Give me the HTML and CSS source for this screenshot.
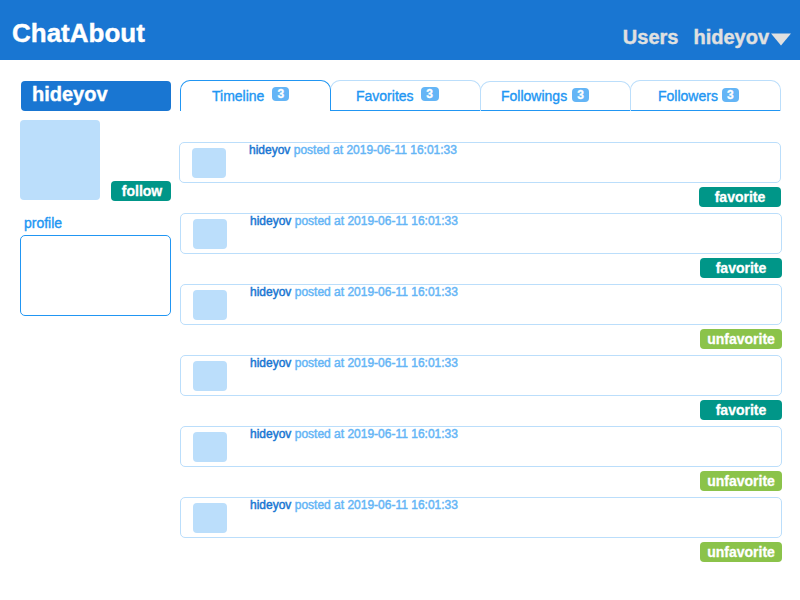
FILE: index.html
```html
<!DOCTYPE html>
<html lang="en">
<head>
<meta charset="utf-8">
<title>ChatAbout</title>
<link rel="stylesheet" href="styles.css">
</head>
<body>
<header class="header">
  <h1 class="brand">ChatAbout</h1>
  <nav class="nav">
    <a class="nav-users">Users</a>
    <a class="nav-account">hideyov<svg class="caret" width="20" height="13" viewBox="0 0 20 13"><path d="M0 0.5H20L10 12.5Z"/></svg></a>
  </nav>
</header>
<div class="page">
  <aside class="sidebar">
    <h2 class="username">hideyov</h2>
    <div class="identity">
      <div class="avatar"></div>
      <button class="button follow">follow</button>
    </div>
    <div class="profile-label">profile</div>
    <div class="profile-box"></div>
  </aside>
  <main class="content">
    <div class="tabs">
      <a class="tab active"><span>Timeline</span><span class="count">3</span></a>
      <a class="tab favorites"><span>Favorites</span><span class="count">3</span></a>
      <a class="tab followings"><span>Followings</span><span class="count">3</span></a>
      <a class="tab followers"><span>Followers</span><span class="count">3</span></a>
    </div>
    <div class="posts">
      <article class="post">
        <div class="card"><div class="thumb"></div><p class="meta"><b>hideyov</b> posted at 2019-06-11 16:01:33</p></div>
        <button class="button">favorite</button>
      </article>
      <article class="post">
        <div class="card"><div class="thumb"></div><p class="meta"><b>hideyov</b> posted at 2019-06-11 16:01:33</p></div>
        <button class="button">favorite</button>
      </article>
      <article class="post">
        <div class="card"><div class="thumb"></div><p class="meta"><b>hideyov</b> posted at 2019-06-11 16:01:33</p></div>
        <button class="button remove">unfavorite</button>
      </article>
      <article class="post">
        <div class="card"><div class="thumb"></div><p class="meta"><b>hideyov</b> posted at 2019-06-11 16:01:33</p></div>
        <button class="button">favorite</button>
      </article>
      <article class="post">
        <div class="card"><div class="thumb"></div><p class="meta"><b>hideyov</b> posted at 2019-06-11 16:01:33</p></div>
        <button class="button remove">unfavorite</button>
      </article>
      <article class="post">
        <div class="card"><div class="thumb"></div><p class="meta"><b>hideyov</b> posted at 2019-06-11 16:01:33</p></div>
        <button class="button remove">unfavorite</button>
      </article>
    </div>
  </main>
</div>
</body>
</html>
```
FILE: styles.css
```css
* { box-sizing: border-box; }

body {
  margin: 0;
  height: 600px;
  background: #fff;
  font-family: "Liberation Sans", Arial, sans-serif;
  overflow: hidden;
}

h1, h2, p { margin: 0; }

.header {
  display: flex;
  justify-content: space-between;
  height: 60px;
  padding: 0 9px 0 12px;
  background: #1976d2;
}

.brand {
  padding-top: 18px;
  color: #fff;
  font-size: 26px;
  line-height: 30px;
  -webkit-text-stroke: 0.4px currentColor;
}

.nav {
  display: flex;
  gap: 15px;
  padding-top: 25px;
  color: #e0e0e0;
  font-size: 20px;
  font-weight: bold;
  line-height: 24px;
  -webkit-text-stroke: 0.4px currentColor;
}

.nav-account { display: flex; }

.caret {
  margin: 8px 0 0 2px;
  fill: #e0e0e0;
}

.page {
  display: flex;
  gap: 9px;
  padding: 20px 18px 0 20px;
}

.sidebar { width: 151px; }

.username {
  height: 30px;
  margin: 1px 0 0 1px;
  padding-left: 11px;
  border-radius: 4px;
  background: #1976d2;
  color: #fff;
  font-size: 20px;
  line-height: 27px;
  -webkit-text-stroke: 0.4px currentColor;
}

.identity {
  display: flex;
  justify-content: space-between;
  align-items: flex-end;
  height: 81px;
  margin-top: 9px;
}

.avatar {
  width: 80px;
  height: 80px;
  margin-bottom: 1px;
  border-radius: 4px;
  background: #bbdefb;
}

.button {
  display: block;
  width: 82px;
  height: 20px;
  padding: 0;
  border: 0;
  border-radius: 4px;
  background: #009688;
  color: #fff;
  font: bold 14px/20px "Liberation Sans", Arial, sans-serif;
  text-align: center;
  -webkit-text-stroke: 0.3px currentColor;
}

.button.remove { background: #8bc34a; }

.follow {
  width: 60px;
  padding-left: 2px;
}

.profile-label {
  margin-top: 14px;
  padding-left: 4px;
  color: #2196f3;
  font-size: 14px;
  line-height: 16px;
  -webkit-text-stroke: 0.35px currentColor;
}

.profile-box {
  height: 81px;
  margin-top: 4px;
  border: 1px solid #2196f3;
  border-radius: 5px;
}

.content { width: 602px; }

.tabs {
  display: flex;
  height: 31px;
}

.tab {
  display: flex;
  width: 151px;
  height: 31px;
  margin-right: -1px;
  padding: 7px 0 0 25px;
  border: 1px solid #bbdefb;
  border-bottom: 0;
  border-radius: 10px 10px 0 0;
  background: linear-gradient(#2196f3, #2196f3) left bottom / 100% 1px no-repeat;
  color: #2196f3;
  font-size: 14px;
  line-height: 16px;
  -webkit-text-stroke: 0.35px currentColor;
}

.tab.active {
  z-index: 1;
  padding-left: 31px;
  border-color: #2196f3;
  background: none;
}

.tab.followings {
  height: 30px;
  margin-top: 1px;
  padding: 6px 0 0 20px;
}

.tab.followers { padding-left: 27px; }

.count {
  width: 17px;
  height: 14px;
  margin: -1px 0 0 8px;
  border-radius: 4px;
  background: #64b5f6;
  color: #fff;
  font-size: 12px;
  font-weight: bold;
  line-height: 14px;
  text-align: center;
}

.favorites .count {
  width: 18px;
  margin-left: 7px;
}

.followings .count { margin: 0 0 0 5px; }
.followers .count { margin: 0 0 0 4px; }

.posts { padding-top: 31px; }

.post {
  display: flex;
  flex-direction: column;
  align-items: flex-end;
  gap: 4px;
  height: 71px;
}

.post:first-child { margin: 0 1px 0 -1px; }

.card {
  display: flex;
  width: 602px;
  height: 41px;
  padding: 0 12px;
  border: 1px solid #bbdefb;
  border-radius: 5px;
}

.thumb {
  width: 34px;
  height: 30px;
  margin: 5px 23px 0 0;
  border-radius: 4px;
  background: #bbdefb;
}

.meta {
  color: #64b5f6;
  font-size: 12px;
  line-height: 14px;
  -webkit-text-stroke: 0.45px currentColor;
}

.meta b {
  color: #1976d2;
  font-weight: normal;
}
```
